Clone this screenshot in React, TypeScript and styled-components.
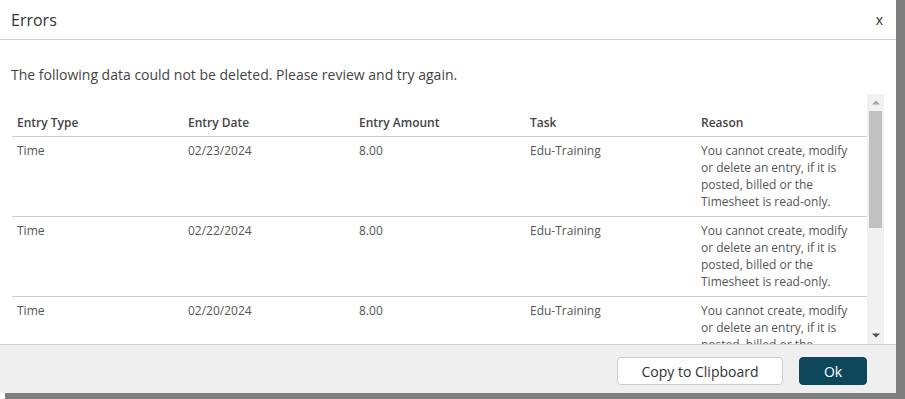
import styled, { createGlobalStyle } from "styled-components";

const GlobalStyle = createGlobalStyle`
  html, body {
    margin: 0;
    padding: 0;
    background: #ffffff;
  }
  body {
    font-family: "Open Sans", "Liberation Sans", Arial, sans-serif;
  }
`;

const Frame = styled.div`
  width: 905px;
  height: 399px;
  box-sizing: border-box;
  padding: 0 9px 6px 0;
  display: flex;
  background: linear-gradient(to right, #ffffff 5px, #7e7e7e 5px);
`;

const Dialog = styled.div`
  flex: 1;
  background: #ffffff;
  display: flex;
  flex-direction: column;
  min-width: 0;
`;

const Header = styled.div`
  height: 39px;
  flex-shrink: 0;
  display: flex;
  align-items: center;
  justify-content: space-between;
  padding: 0 13px 0 11px;
  border-bottom: 1px solid #cfcfcf;
`;

const Title = styled.div`
  font-size: 16px;
  color: #333333;
`;

const Close = styled.button`
  border: none;
  background: none;
  padding: 0;
  font-family: inherit;
  font-size: 14px;
  color: #333333;
  cursor: pointer;
`;

const Message = styled.p`
  margin: 0;
  padding: 25px 11px 0;
  height: 29px;
  flex-shrink: 0;
  font-size: 14px;
  line-height: 19px;
  color: #444444;
`;

const TableArea = styled.div`
  flex: 1;
  min-height: 0;
  margin: 0 12px;
  display: flex;
`;

const Scroller = styled.div`
  flex: 1;
  min-width: 0;
  padding-top: 15px;
  overflow: hidden;
`;

const ScrollBar = styled.div`
  width: 17px;
  flex-shrink: 0;
  background: #f1f1f1;
  display: flex;
  flex-direction: column;
`;

const ArrowButton = styled.div`
  height: 17px;
  display: flex;
  align-items: center;
  justify-content: center;
`;

const Track = styled.div`
  flex: 1;
  padding: 0 2px;
`;

const Thumb = styled.div`
  height: 117px;
  background: #c1c1c1;
`;

const Table = styled.table`
  width: 100%;
  border-collapse: collapse;
  table-layout: fixed;
  margin-bottom: 15px;
`;

const Th = styled.th`
  text-align: left;
  font-weight: 600;
  font-size: 12px;
  line-height: 17px;
  color: #444444;
  padding: 5px;
  border-bottom: 1px solid #cccccc;
`;

const Td = styled.td`
  vertical-align: top;
  font-size: 12px;
  line-height: 17px;
  color: #555555;
  padding: 5px 15px 6px 5px;
  border-bottom: 1px solid #cccccc;
`;

const Footer = styled.div`
  height: 49px;
  flex-shrink: 0;
  box-sizing: border-box;
  background: #efefef;
  border-top: 1px solid #cfcfcf;
  display: flex;
  justify-content: flex-end;
  align-items: flex-start;
  gap: 16px;
  padding: 12px 29px 0 0;
`;

const Button = styled.button<{ $primary?: boolean }>`
  height: 28px;
  box-sizing: border-box;
  padding: 0;
  width: ${(p) => (p.$primary ? "68px" : "166px")};
  border-radius: 4px;
  border: 1px solid ${(p) => (p.$primary ? "#0e475c" : "#cccccc")};
  background: ${(p) => (p.$primary ? "#0e475c" : "#ffffff")};
  color: ${(p) => (p.$primary ? "#ffffff" : "#333333")};
  font-family: inherit;
  font-size: 14px;
  cursor: pointer;
`;

const reason =
  "You cannot create, modify or delete an entry, if it is posted, billed or the Timesheet is read-only.";

const rows = [
  { type: "Time", date: "02/23/2024", amount: "8.00", task: "Edu-Training" },
  { type: "Time", date: "02/22/2024", amount: "8.00", task: "Edu-Training" },
  { type: "Time", date: "02/20/2024", amount: "8.00", task: "Edu-Training" },
  { type: "Time", date: "02/19/2024", amount: "8.00", task: "Edu-Training" },
  { type: "Time", date: "02/16/2024", amount: "8.00", task: "Edu-Training" },
];

export default function App() {
  return (
    <>
      <GlobalStyle />
      <Frame>
        <Dialog>
          <Header>
            <Title>Errors</Title>
            <Close>x</Close>
          </Header>
          <Message>
            The following data could not be deleted. Please review and try again.
          </Message>
          <TableArea>
            <Scroller>
              <Table>
                <thead>
                  <tr>
                    <Th>Entry Type</Th>
                    <Th>Entry Date</Th>
                    <Th>Entry Amount</Th>
                    <Th>Task</Th>
                    <Th>Reason</Th>
                  </tr>
                </thead>
                <tbody>
                  {rows.map((r) => (
                    <tr key={r.date}>
                      <Td>{r.type}</Td>
                      <Td>{r.date}</Td>
                      <Td>{r.amount}</Td>
                      <Td>{r.task}</Td>
                      <Td>{reason}</Td>
                    </tr>
                  ))}
                </tbody>
              </Table>
            </Scroller>
            <ScrollBar>
              <ArrowButton>
                <svg width="8" height="5" viewBox="0 0 8 5">
                  <path d="M0 4.5 L8 4.5 L4 0.5 Z" fill="#a3a3a3" />
                </svg>
              </ArrowButton>
              <Track>
                <Thumb />
              </Track>
              <ArrowButton>
                <svg width="8" height="5" viewBox="0 0 8 5">
                  <path d="M0 0.5 L8 0.5 L4 4.5 Z" fill="#505050" />
                </svg>
              </ArrowButton>
            </ScrollBar>
          </TableArea>
          <Footer>
            <Button>Copy to Clipboard</Button>
            <Button $primary>Ok</Button>
          </Footer>
        </Dialog>
      </Frame>
    </>
  );
}
